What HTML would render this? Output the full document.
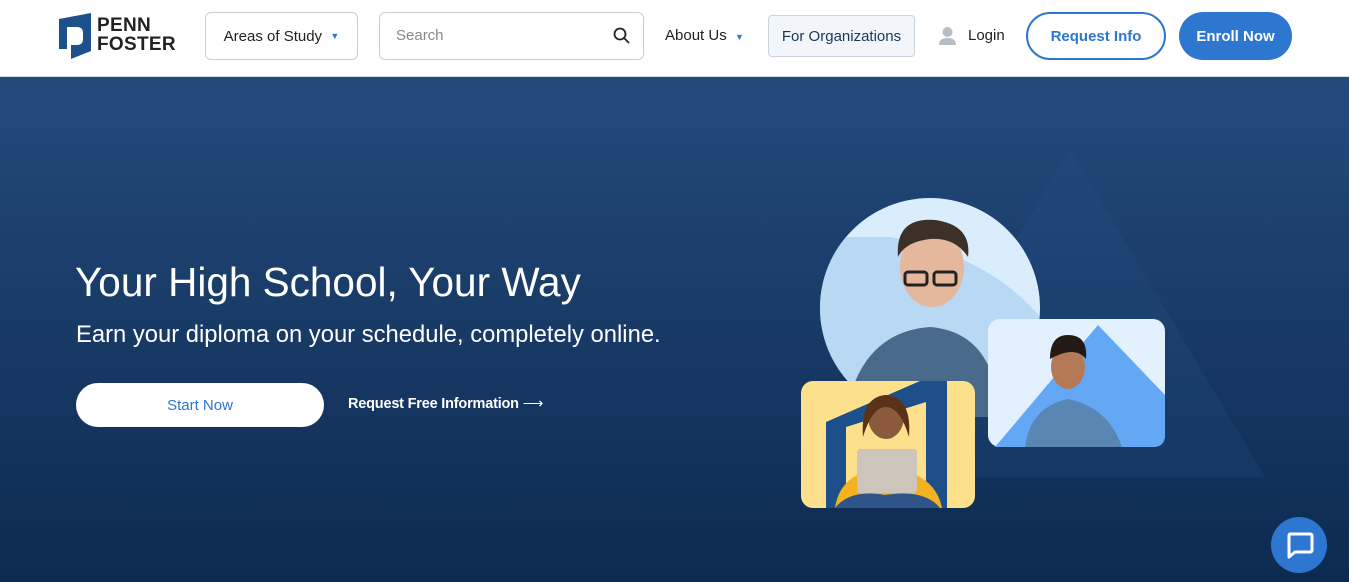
<!DOCTYPE html>
<html><head><meta charset="utf-8"><style>
*{margin:0;padding:0;box-sizing:border-box}
body{width:1349px;height:582px;overflow:hidden;font-family:"Liberation Sans",sans-serif;background:#fff;position:relative}
.hdr{position:absolute;left:0;top:0;width:1349px;height:77px;background:#fff;border-bottom:1px solid #d8dde3}
.abs{position:absolute}
.btn{position:absolute;display:flex;align-items:center;justify-content:center;font-size:15px}
.hero{position:absolute;left:0;top:77px;width:1349px;height:505px;background:linear-gradient(180deg,#244a7c 0%,#183a66 50%,#0d2a50 100%);overflow:hidden}
</style></head><body>
<div class="hdr">
  <svg class="abs" style="left:59px;top:13px" width="32" height="46" viewBox="0 0 32 46">
    <path d="M0 6 L0 36 L8 36 L8 14 L18 14 Q24 14 24 20 L24 26 Q24 32 18 32 L12 32 L12 46 L32 38 L32 0 Z" fill="#1d4f8a"/>
  </svg>
  <div class="abs" style="left:97px;top:16px;font-size:19px;font-weight:bold;line-height:19px;color:#222;letter-spacing:.3px">PENN<br>FOSTER</div>
  <div class="btn" style="left:205px;top:12px;width:153px;height:48px;border:1px solid #c9ced4;border-radius:6px;color:#222">Areas of Study&nbsp;&nbsp;<span style="color:#2e77d0;font-size:9px">▼</span></div>
  <div class="abs" style="left:379px;top:12px;width:265px;height:48px;border:1px solid #c9ced4;border-radius:6px"></div>
  <div class="abs" style="left:396px;top:27px;font-size:15px;color:#888">Search</div>
  <svg class="abs" style="left:613px;top:27px" width="17" height="17" viewBox="0 0 17 17"><circle cx="7" cy="7" r="5.5" fill="none" stroke="#222" stroke-width="1.8"/><path d="M11 11 L16 16" stroke="#222" stroke-width="1.8"/></svg>
  <div class="abs" style="left:665px;top:27px;font-size:15px;color:#222">About Us&nbsp;&nbsp;<span style="color:#2e77d0;font-size:9px">▼</span></div>
  <div class="btn" style="left:768px;top:15px;width:147px;height:42px;border:1px solid #c9d3de;border-radius:4px;background:#f2f6fa;color:#1c3557">For Organizations</div>
  <svg class="abs" style="left:938px;top:26px" width="19" height="19" viewBox="0 0 19 19"><circle cx="9.5" cy="6" r="5" fill="#b8bec6"/><path d="M1 19 Q1 12 9.5 12 Q18 12 18 19Z" fill="#b8bec6"/></svg>
  <div class="abs" style="left:968px;top:27px;font-size:15px;color:#222">Login</div>
  <div class="btn" style="left:1026px;top:12px;width:140px;height:48px;border:2px solid #2e77d0;border-radius:24px;color:#2e77d0;font-weight:bold">Request Info</div>
  <div class="btn" style="left:1179px;top:12px;width:113px;height:48px;background:#2e77d0;border-radius:24px;color:#fff;font-weight:bold">Enroll Now</div>
</div>
<div class="hero">
  <svg class="abs" style="left:0;top:0" width="1349" height="505">
    <polygon points="1070,72 1265,400 875,400" fill="#2a5590" opacity=".2"/>
    <defs><clipPath id="c"><circle cx="930" cy="231" r="110"/></clipPath></defs>
    <circle cx="930" cy="231" r="110" fill="#d9edfd"/>
    <g clip-path="url(#c)">
      <path d="M820 160 L890 160 Q990 180 1040 240 L1040 360 L820 360Z" fill="#b8d8f3"/>
    </g>
    <path d="M845 340 Q860 255 930 250 Q995 255 1000 340 Z" fill="#4a6a8c"/>
    <ellipse cx="932" cy="190" rx="32" ry="40" fill="#e5b89d"/>
    <path d="M898 180 Q895 140 935 143 Q972 148 968 180 Q955 160 930 162 Q905 165 898 180Z" fill="#3c3129"/>
    <rect x="905" y="195" width="22" height="13" rx="3" fill="none" stroke="#222" stroke-width="3"/>
    <rect x="934" y="195" width="22" height="13" rx="3" fill="none" stroke="#222" stroke-width="3"/>
    <rect x="988" y="242" width="177" height="128" rx="12" fill="#e2f1fd"/>
    <path d="M995 370 L1098 248 L1165 318 L1165 358 Q1165 370 1153 370Z" fill="#64a8f5"/>
    <path d="M1025 370 Q1030 330 1068 322 Q1108 330 1122 370Z" fill="#5a86b4"/>
    <ellipse cx="1068" cy="290" rx="17" ry="22" fill="#b47a57"/>
    <path d="M1050 282 Q1050 258 1068 258 Q1088 258 1086 282 Q1075 268 1050 282Z" fill="#241a15"/>
    <rect x="801" y="304" width="174" height="127" rx="12" fill="#fde08c"/>
    <path d="M826 431 L826 345 L920 304 L947 304 L947 431 L926 431 L926 325 L846 350 L846 431Z" fill="#1d4f8a"/>
    <path d="M835 431 Q840 395 885 390 Q935 395 942 431Z" fill="#f3b21f"/>
    <ellipse cx="886" cy="340" rx="18" ry="22" fill="#8b5a3c"/>
    <path d="M863 360 Q860 320 886 318 Q912 320 909 360 Q900 330 886 330 Q872 330 863 360Z" fill="#5b3218"/>
    <rect x="857" y="372" width="60" height="44" rx="3" fill="#cdc4bc"/>
    <path d="M835 431 Q850 412 885 418 Q925 412 940 431Z" fill="#2f5488"/>
  </svg>
  <div class="abs" style="left:75px;top:182px;font-size:40.5px;color:#fff">Your High School, Your Way</div>
  <div class="abs" style="left:76px;top:244px;font-size:23.8px;color:#fff">Earn your diploma on your schedule, completely online.</div>
  <div class="btn" style="left:76px;top:306px;width:248px;height:44px;background:#fff;border-radius:22px;color:#2e77d0">Start Now</div>
  <div class="abs" style="left:348px;top:319px;font-size:14.5px;font-weight:bold;color:#fff;letter-spacing:-.2px">Request Free Information <span style="font-weight:normal">⟶</span></div>
  <div class="abs" style="left:1271px;top:440px;width:56px;height:56px;border-radius:50%;background:#2e77d0"></div>
  <svg class="abs" style="left:1285px;top:453px" width="30" height="30" viewBox="0 0 30 30"><path d="M5 4 H25 Q27 4 27 6 V20 Q27 22 25 22 H10 L4 27 V6 Q4 4 5 4Z" fill="none" stroke="#fff" stroke-width="3" stroke-linejoin="round"/></svg>
</div>
</body></html>
